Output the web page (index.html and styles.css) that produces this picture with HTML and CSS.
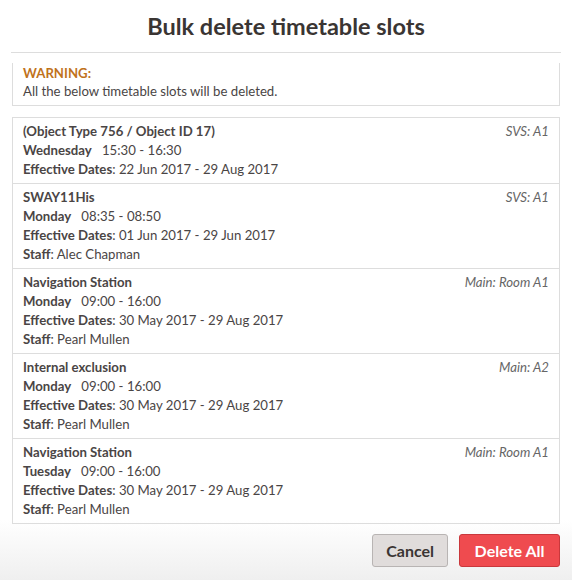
FILE: index.html
```
<!DOCTYPE html>
<html lang="en">
<head>
    <meta charset="UTF-8">
    <meta name="viewport" content="width=device-width, initial-scale=1.0">
    <title>Bulk delete timetable slots</title>
    <link rel="stylesheet" href="styles.css">
</head>
<body>
    <div class="modal">
        <h2 class="title">Bulk delete timetable slots</h2>
        <div class="warning">
            <div class="warning-head">WARNING:</div>
            <div>All the below timetable slots will be deleted.</div>
        </div>

        <ul class="slots">
            <li class="slot">
                <div class="slot-info">
                    <div class="name">(Object Type 756 / Object ID 17)</div>
                    <div><b>Wednesday</b>&nbsp;&nbsp; 15:30 - 16:30</div>
                    <div><b>Effective Dates</b>: 22 Jun 2017 - 29 Aug 2017</div>
                </div>
                <div class="room">SVS: A1</div>
            </li>
            <li class="slot">
                <div class="slot-info">
                    <div class="name">SWAY11His</div>
                    <div><b>Monday</b>&nbsp;&nbsp; 08:35 - 08:50</div>
                    <div><b>Effective Dates</b>: 01 Jun 2017 - 29 Jun 2017</div>
                    <div><b>Staff</b>: Alec Chapman</div>
                </div>
                <div class="room">SVS: A1</div>
            </li>
            <li class="slot">
                <div class="slot-info">
                    <div class="name">Navigation Station</div>
                    <div><b>Monday</b>&nbsp;&nbsp; 09:00 - 16:00</div>
                    <div><b>Effective Dates</b>: 30 May 2017 - 29 Aug 2017</div>
                    <div><b>Staff</b>: Pearl Mullen</div>
                </div>
                <div class="room">Main: Room A1</div>
            </li>
            <li class="slot">
                <div class="slot-info">
                    <div class="name">Internal exclusion</div>
                    <div><b>Monday</b>&nbsp;&nbsp; 09:00 - 16:00</div>
                    <div><b>Effective Dates</b>: 30 May 2017 - 29 Aug 2017</div>
                    <div><b>Staff</b>: Pearl Mullen</div>
                </div>
                <div class="room">Main: A2</div>
            </li>
            <li class="slot">
                <div class="slot-info">
                    <div class="name">Navigation Station</div>
                    <div><b>Tuesday</b>&nbsp;&nbsp; 09:00 - 16:00</div>
                    <div><b>Effective Dates</b>: 30 May 2017 - 29 Aug 2017</div>
                    <div><b>Staff</b>: Pearl Mullen</div>
                </div>
                <div class="room">Main: Room A1</div>
            </li>
        </ul>

        <div class="footer">
            <button class="btn btn-cancel">Cancel</button>
            <button class="btn btn-delete">Delete All</button>
        </div>
    </div>
</body>
</html>
```

FILE: styles.css
```
*{
    padding: 0;
    margin: 0;
    box-sizing: border-box;
}
body{
    font-family: 'Lato', sans-serif;
    color: #4a4545;
    font-size: 13.2px;
    background: linear-gradient(to bottom, #fff 0, #fff 520px, #efefef 580px);
    height: 580px;
}
.modal{
    padding: 0 12px;
}
.title{
    text-align: center;
    font-size: 23.5px;
    font-weight: bold;
    color: #3a3533;
    line-height: 30px;
    padding: 11px 0 11px;
    border-bottom: 1px solid #ddd;
    margin: 0 -1px 10px;
}
.warning{
    border: 1px solid #ddd;
    border-top: none;
    padding: 1px 10px 5px;
    line-height: 18px;
    margin-bottom: 11px;
}
.warning-head{
    color: #c0721c;
    font-weight: bold;
}
.slots{
    list-style: none;
    border: 1px solid #ddd;
}
.slot{
    display: flex;
    justify-content: space-between;
    padding: 4px 10px 4px;
    border-top: 1px solid #ddd;
}
.slot:first-child{
    border-top: none;
}
.slot-info div, .room{
    height: 19px;
    line-height: 19px;
}
.name, .slot-info b{
    font-weight: bold;
}
.room{
    font-style: italic;
    color: #666;
}
.footer{
    display: flex;
    justify-content: flex-end;
    gap: 11px;
    padding-top: 10px;
}
.btn{
    font-family: 'Lato', sans-serif;
    font-size: 16px;
    font-weight: bold;
    height: 33px;
    padding: 0 13px;
    border-radius: 3px;
}
.btn-cancel{
    background-color: #e0dcdb;
    border: 1px solid #b8b4b3;
    color: #3a3533;
}
.btn-delete{
    padding: 0 14.5px;
    background-color: #ef4b4f;
    border: 1px solid #c9383c;
    color: white;
}
```
